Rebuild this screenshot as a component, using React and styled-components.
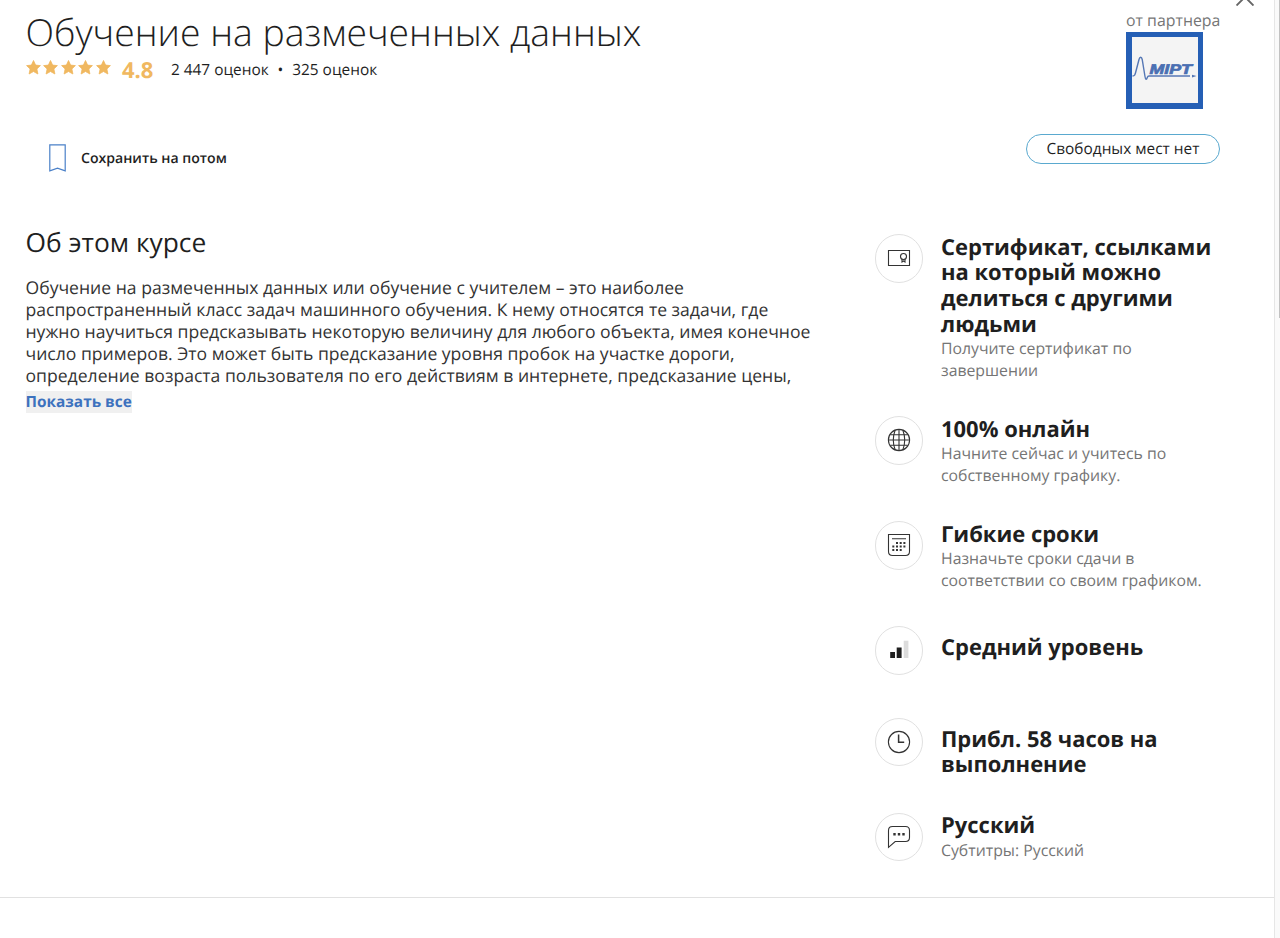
import React from 'react';
import styled, { createGlobalStyle } from 'styled-components';

const GlobalStyle = createGlobalStyle`
  * {
    box-sizing: border-box;
  }
  body {
    margin: 0;
    background: #fff;
    color: #1f1f1f;
    font-family: 'Open Sans', sans-serif;
    text-rendering: geometricPrecision;
  }
  h1, h2, h3, p {
    margin: 0;
  }
`;

const Page = styled.div`
  display: flex;
  height: 938px;
  overflow: hidden;
`;

const Modal = styled.div`
  position: relative;
  flex: 1;
`;

const Content = styled.div`
  height: 898px;
  padding: 12px 54px 0 25.5px;
  border-bottom: 1px solid #e1e1e1;
`;

const Scrollbar = styled.div`
  width: 6px;
  padding-left: 4px;
  border-left: 1px solid #e6e6e6;
  background: #fafafa;
`;

const Thumb = styled.div`
  height: 318px;
  background: #c2c2c2;
`;

const CloseIcon = styled.svg`
  position: absolute;
  top: -12.5px;
  right: 20px;
  width: 18px;
  height: 18px;
`;

const Header = styled.header`
  display: flex;
  justify-content: space-between;
  height: 222px;
`;

const Title = styled.h1`
  font-size: 37.35px;
  font-weight: 300;
  line-height: 40px;
`;

const Rating = styled.div`
  display: flex;
  align-items: center;
  height: 34px;
  font-size: 15.4px;
`;

const Stars = styled.div`
  display: flex;
  gap: 2.5px;
  margin-top: -3px;

  svg {
    width: 15px;
    height: 15px;
    fill: #f0b860;
    stroke: #f0b860;
    stroke-width: 0.8;
    stroke-linejoin: round;
  }
`;

const Score = styled.span`
  margin: 1px 17.5px 0 11.5px;
  color: #f0b860;
  font-size: 22px;
  font-weight: 700;
`;

const Dot = styled.span`
  margin: 0 9px 0 8.8px;
`;

const SaveButton = styled.div`
  display: flex;
  align-items: center;
  gap: 15px;
  margin: 58px 0 0 23.5px;
  font-size: 14.1px;
  font-weight: 600;
`;

const Partner = styled.div`
  display: flex;
  flex-direction: column;
  align-items: flex-end;
`;

const PartnerInfo = styled.div`
  width: 94px;
  margin-top: -1px;
  color: #757575;
  font-size: 15.85px;
  line-height: 19px;
  white-space: nowrap;

  svg {
    display: block;
    margin-top: 2px;
  }
`;

const SeatsBadge = styled.div`
  width: 194px;
  height: 30px;
  margin-top: 25px;
  border: 1px solid #5aa9cf;
  border-radius: 15px;
  font-size: 15.4px;
  line-height: 28.8px;
  text-align: center;
`;

const Columns = styled.div`
  display: flex;
  justify-content: space-between;
`;

const About = styled.section`
  width: 800px;
  margin-top: -2px;
`;

const SectionTitle = styled.h2`
  font-size: 26.35px;
  font-weight: 400;
  line-height: 20px;
`;

const Description = styled.p`
  margin-top: 25px;
  color: #333;
  font-size: 17.59px;
  line-height: 22px;
  white-space: nowrap;
`;

const ShowAll = styled.span`
  display: inline-block;
  margin-top: 4px;
  background: #f0f0f0;
  color: #3d72be;
  font-size: 15.4px;
  font-weight: 700;
  line-height: 22px;
`;

const FactList = styled.div`
  display: flex;
  flex-direction: column;
  gap: 34.8px;
  width: 345.5px;
`;

const Fact = styled.div`
  display: flex;
  gap: 18px;
`;

const IconCircle = styled.div`
  display: flex;
  align-items: center;
  justify-content: center;
  width: 48.5px;
  height: 48.5px;
  margin: 0 0 8.3px;
  border: 1px solid #e1e1e1;
  border-radius: 50%;

  svg {
    width: 24px;
    height: 24px;
    fill: none;
    stroke: #333;
    stroke-width: 1.1;
  }
`;

const FactText = styled.div`
  padding-top: ${(props) => (props.$single ? '9px' : '0.5px')};
  white-space: nowrap;
`;

const FactTitle = styled.h3`
  font-size: 21.98px;
  font-weight: 700;
  line-height: 25.7px;
`;

const FactNote = styled.p`
  color: #757575;
  font-size: 15.8px;
  line-height: 22px;
`;

const Lines = ({ items }) =>
  items.map((line) => (
    <React.Fragment key={line}>
      {line}
      <br />
    </React.Fragment>
  ));

const Star = () => (
  <svg viewBox="0 0 15 15">
    <path d="M7.5 0.5 9.6 5.1 14.4 5.6 10.9 9 11.9 14 7.5 11.5 3.1 14 4.1 9 0.6 5.6 5.4 5.1Z" />
  </svg>
);

const Bookmark = () => (
  <svg width="17" height="28" viewBox="0 0 17 28" fill="none" stroke="#4a80c8" strokeWidth="1.2">
    <path d="M0.8 0.8H16.2V26.8L8.5 24.2 0.8 26.8Z" />
  </svg>
);

const MiptLogo = () => (
  <svg width="77" height="77" viewBox="0 0 77 77">
    <rect width="77" height="77" fill="#255fb5" />
    <rect x="6" y="5" width="66" height="66" fill="#f4f4f4" />
    <path
      d="M6.5 44C8.5 44 9 43.5 10 39L13 27.5C13.8 24.5 15.6 24.5 16.2 27.5L19 44.5C19.5 48 20.5 48 21.3 45.5C21.7 44.3 22 44 23 44H64"
      fill="none"
      stroke="#5577b5"
      strokeWidth="1.4"
    />
    <path d="M66 42.8 70.5 44 66 45.4Z" fill="#5577b5" />
    <text
      x="23.5"
      y="41.6"
      textLength="42.5"
      lengthAdjust="spacingAndGlyphs"
      fill="#4a6fb2"
      stroke="#4a6fb2"
      strokeWidth="0.7"
      fontFamily="Liberation Sans"
      fontSize="14"
      fontWeight="700"
      fontStyle="italic"
    >
      MIPT
    </text>
  </svg>
);

const CertificateIcon = () => (
  <svg viewBox="0 0 24 24">
    <path d="M1.5 4.5H22.5V19.5H1.5Z" />
    <circle cx="16.5" cy="10.5" r="3" />
    <path d="M15 13V16L16.5 15 18 16V13" />
  </svg>
);

const GlobeIcon = () => (
  <svg viewBox="0 0 24 24">
    <circle cx="12" cy="12" r="10.6" />
    <path d="M8.2 2C5.7 8.5 5.7 15.5 8.2 22M15.8 2C18.3 8.5 18.3 15.5 15.8 22M12 1.4V22.6M1.4 12H22.6M3.4 6.8H20.6M3.4 17.2H20.6" />
  </svg>
);

const CalendarIcon = () => (
  <svg viewBox="0 0 24 24">
    <path d="M1.5 1.5H22.5V18.5C22.5 21.2 21.2 22.5 18.5 22.5H5.5C2.8 22.5 1.5 21.2 1.5 18.5ZM5 5.7H19" />
    <path d="M9 10H19M5.3 13.5H19M5.3 17H15.5" strokeWidth="2" strokeDasharray="2 1.7" />
  </svg>
);

const LevelIcon = () => (
  <svg viewBox="0 0 24 24">
    <path d="M3.2 14H8V20H3.2ZM9.7 9.5H14.6V20H9.7Z" fill="#1f1f1f" stroke="none" />
    <path d="M16.7 2.7H21.4V20H16.7Z" fill="#dcdcdc" stroke="none" />
  </svg>
);

const ClockIcon = () => (
  <svg viewBox="0 0 24 24">
    <circle cx="12" cy="12" r="10.6" />
    <path d="M11.6 4.5V12.3H17.2" strokeWidth="1.5" />
  </svg>
);

const ChatIcon = () => (
  <svg viewBox="0 0 24 24">
    <path d="M1.5 22.3V5.5C1.5 2.8 2.8 1.5 5.5 1.5H18.5C21.2 1.5 22.5 2.8 22.5 5.5V12.5C22.5 15.2 21.2 16.5 18.5 16.5H8.2Z" />
    <path d="M6.3 9.3H8.7M10.8 9.3H13.2M15.3 9.3H17.7" strokeWidth="2.4" />
  </svg>
);

const description = [
  'Обучение на размеченных данных или обучение с учителем – это наиболее',
  'распространенный класс задач машинного обучения. К нему относятся те задачи, где',
  'нужно научиться предсказывать некоторую величину для любого объекта, имея конечное',
  'число примеров. Это может быть предсказание уровня пробок на участке дороги,',
  'определение возраста пользователя по его действиям в интернете, предсказание цены,',
];

const facts = [
  {
    icon: <CertificateIcon />,
    title: ['Сертификат, ссылками', 'на который можно', 'делиться с другими', 'людьми'],
    note: ['Получите сертификат по', 'завершении'],
  },
  {
    icon: <GlobeIcon />,
    title: ['100% онлайн'],
    note: ['Начните сейчас и учитесь по', 'собственному графику.'],
  },
  {
    icon: <CalendarIcon />,
    title: ['Гибкие сроки'],
    note: ['Назначьте сроки сдачи в', 'соответствии со своим графиком.'],
  },
  { icon: <LevelIcon />, title: ['Средний уровень'] },
  { icon: <ClockIcon />, title: ['Прибл. 58 часов на', 'выполнение'] },
  { icon: <ChatIcon />, title: ['Русский'], note: ['Субтитры: Русский'] },
];

export default function App() {
  return (
    <Page>
      <GlobalStyle />
      <Modal>
        <CloseIcon viewBox="0 0 18 18" stroke="#666" strokeWidth="1.9">
          <path d="M0.5 0.5 17.5 17.5M17.5 0.5 0.5 17.5" />
        </CloseIcon>
        <Content>
          <Header>
            <div>
              <Title>Обучение на размеченных данных</Title>
              <Rating>
                <Stars>
                  {[1, 2, 3, 4, 5].map((n) => (
                    <Star key={n} />
                  ))}
                </Stars>
                <Score>4.8</Score>
                <span>2 447 оценок</span>
                <Dot>•</Dot>
                <span>325 оценок</span>
              </Rating>
              <SaveButton>
                <Bookmark />
                Сохранить на потом
              </SaveButton>
            </div>
            <Partner>
              <PartnerInfo>
                от партнера
                <MiptLogo />
              </PartnerInfo>
              <SeatsBadge>Свободных мест нет</SeatsBadge>
            </Partner>
          </Header>
          <Columns>
            <About>
              <SectionTitle>Об этом курсе</SectionTitle>
              <Description>
                <Lines items={description} />
              </Description>
              <ShowAll>Показать все</ShowAll>
            </About>
            <FactList>
              {facts.map((fact) => (
                <Fact key={fact.title[0]}>
                  <IconCircle>{fact.icon}</IconCircle>
                  <FactText $single={!fact.note}>
                    <FactTitle>
                      <Lines items={fact.title} />
                    </FactTitle>
                    {fact.note && (
                      <FactNote>
                        <Lines items={fact.note} />
                      </FactNote>
                    )}
                  </FactText>
                </Fact>
              ))}
            </FactList>
          </Columns>
        </Content>
      </Modal>
      <Scrollbar>
        <Thumb />
      </Scrollbar>
    </Page>
  );
}
